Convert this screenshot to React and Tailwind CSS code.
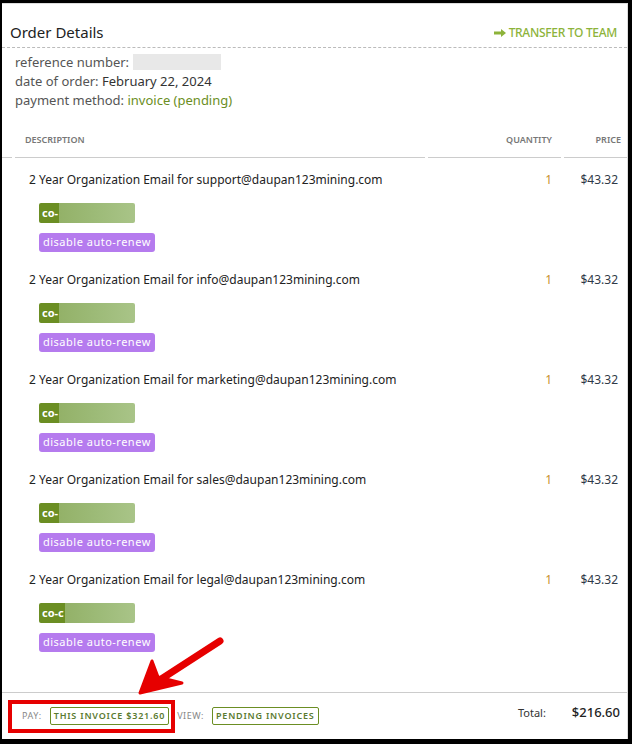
import React from "react";

const items = ["support", "info", "marketing", "sales", "legal"];

const ItemRow = ({ name, last }) => (
  <div className="flex h-[100px] pl-[27px] pr-[9px] pt-[14px]">
    <div className="flex-1">
      <div className="text-[12px] text-[#222] leading-[16px]">
        2 Year Organization Email for {name}@daupan123mining.com
      </div>
      <div className="mt-[15px] ml-[10px] flex h-[20px] w-[96px] overflow-hidden rounded-[2px]">
        <div className="flex items-center bg-[#6b8e23] pl-[3px] pr-[1px] text-[11px] font-bold text-white">
          {last ? "co-c" : "co-"}
        </div>
        <div className="flex-1 bg-gradient-to-r from-[#93b168] via-[#9dbb78] to-[#a9c488]" />
      </div>
      <div className="mt-[10px] ml-[10px] inline-flex h-[19px] items-center rounded-[3px] bg-[#b57bee] px-[4px] text-[11px] tracking-[0.5px] text-white">
        disable auto-renew
      </div>
    </div>
    <div className="w-[80px] text-right text-[12px] leading-[16px] text-[#c8902e] pr-[6px]">1</div>
    <div className="w-[60px] text-right text-[12px] leading-[16px] text-[#2f3a48]">$43.32</div>
  </div>
);

export default function App() {
  return (
    <div
      className="relative flex h-[744px] w-[632px] flex-col border-t-[3px] border-l-[2px] border-r-[4px] border-b-[5px] border-black bg-white"
      style={{ fontFamily: "'Noto Sans', 'DejaVu Sans', sans-serif" }}
    >
      <div className="flex h-full flex-col border-t border-r border-[#ddd]">
        {/* header */}
        <div className="flex items-end justify-between border-b border-dashed border-[#bbb] px-[8px] pb-[4px] h-[44px]">
          <div className="text-[15px] text-[#222]">Order Details</div>
          <div className="flex items-center gap-[3px] pr-[2px] pb-[1px] text-[12px] font-medium tracking-[-0.3px] text-[#8db33a]">
            <svg width="12" height="8" viewBox="0 0 12 8">
              <path d="M0 2.5h7V0l5 4-5 4V5.5H0z" fill="#8db33a" />
            </svg>
            TRANSFER TO TEAM
          </div>
        </div>

        {/* order info */}
        <div className="flex flex-col gap-[3px] px-[13px] pt-[6px] text-[13px] leading-[16px] text-[#555]">
          <div className="flex items-center">
            reference number:
            <span className="ml-[4px] inline-block h-[16px] w-[88px] bg-[#e8e8e8]" />
          </div>
          <div>
            date of order: <span className="text-[#333]">February 22, 2024</span>
          </div>
          <div>
            payment method: <span className="text-[#6b8e23]">invoice (pending)</span>
          </div>
        </div>

        {/* table head */}
        <div className="mt-[15px] flex h-[35px] items-center gap-[3px]">
          <div className="h-full w-[10px] border-b border-[#ccc]" />
          <div className="flex h-full flex-1 items-center border-b border-[#ccc] pl-[10px] text-[9px] font-semibold text-[#777]">
            DESCRIPTION
          </div>
          <div className="flex h-full w-[133px] items-center justify-end border-b border-[#ccc] pr-[9px] text-[9px] font-semibold text-[#777]">
            QUANTITY
          </div>
          <div className="flex h-full w-[63px] items-center justify-end border-b border-[#ccc] pr-[6px] text-[9px] font-semibold text-[#777]">
            PRICE
          </div>
        </div>

        {/* rows */}
        <div className="flex-1">
          {items.map((n, i) => (
            <ItemRow key={n} name={n} last={i === items.length - 1} />
          ))}
        </div>

        {/* footer */}
        <div className="flex h-[47px] items-start border-t border-[#ccc] pl-[20px] pr-[7px] pt-[14px]">
          <div className="relative flex items-center gap-[8px] text-[9px]">
            <span className="tracking-[0.5px] text-[#888]">PAY:</span>
            <span className="rounded-[2px] border border-[#6b8e23] px-[3px] py-[1px] font-semibold tracking-[0.8px] text-[#5a7a30]">
              THIS INVOICE $321.60
            </span>
            <span className="tracking-[0.5px] text-[#888]">VIEW:</span>
            <span className="rounded-[2px] border border-[#6b8e23] px-[3px] py-[1px] font-semibold tracking-[0.8px] text-[#5a7a30]">
              PENDING INVOICES
            </span>
            <div className="absolute left-[-14px] top-[-7px] h-[33px] w-[167px] border-[4px] border-[#e60000]" />
          </div>
          <div className="ml-auto -mt-[4px] flex items-center gap-[26px]">
            <span className="text-[11px] text-[#333]">Total:</span>
            <span className="text-[13px] font-medium text-[#222]">$216.60</span>
          </div>
        </div>
      </div>

      {/* annotation arrow */}
      <svg className="pointer-events-none absolute left-[130px] top-[630px]" width="100" height="70" viewBox="0 0 100 70">
        <path d="M88 8 L20 52" stroke="#e60000" strokeWidth="7" strokeLinecap="round" fill="none" />
        <path d="M8 60 L20 28 L26 44 L50 50 Z" fill="#e60000" stroke="#e60000" strokeWidth="3" strokeLinejoin="round" />
      </svg>
    </div>
  );
}
